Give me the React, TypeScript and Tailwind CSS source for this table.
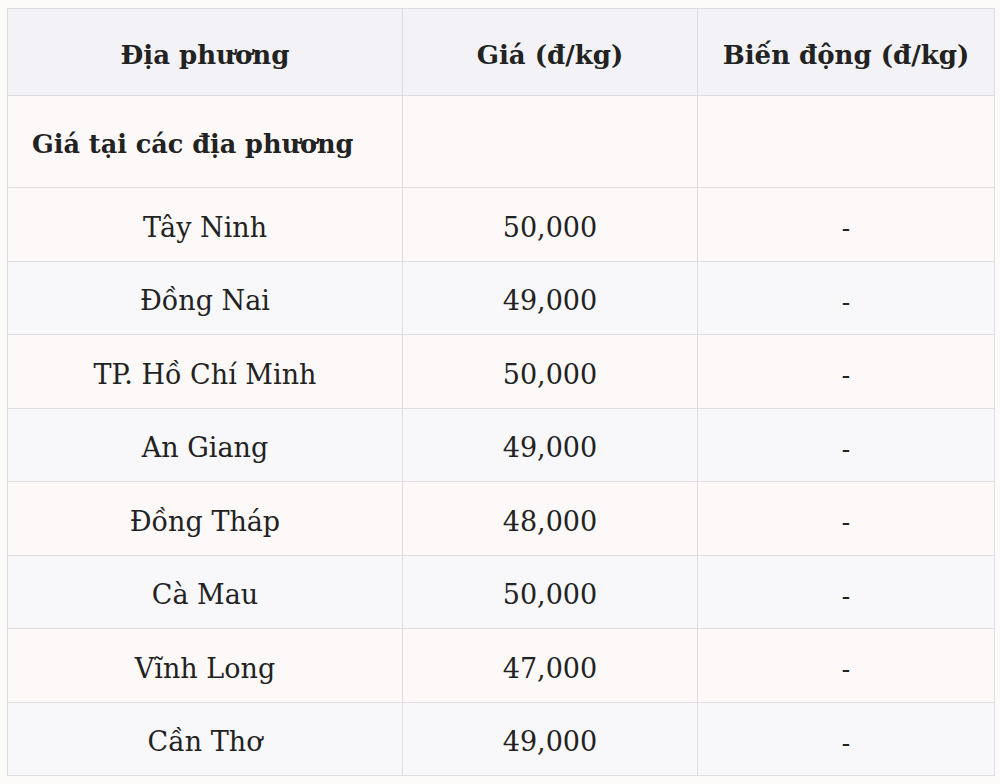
const rows = [
  ['Tây Ninh', '50,000'],
  ['Đồng Nai', '49,000'],
  ['TP. Hồ Chí Minh', '50,000'],
  ['An Giang', '49,000'],
  ['Đồng Tháp', '48,000'],
  ['Cà Mau', '50,000'],
  ['Vĩnh Long', '47,000'],
  ['Cần Thơ', '49,000'],
];

export default function App() {
  return (
    <div className="w-[1000px] h-[784px] bg-[#fdfbfa] pt-2 pl-[7px] font-['DejaVu_Serif',serif] text-[#222222]">
      <table className="w-[987px] border-collapse table-fixed">
        <colgroup>
          <col className="w-[395px]" />
          <col className="w-[295px]" />
          <col className="w-[297px]" />
        </colgroup>
        <thead>
          <tr className="h-[87px] bg-[#f3f2f6]">
            <th className="border border-[#dfdde0] pt-[6px] text-center text-[26px] font-bold">Địa phương</th>
            <th className="border border-[#dfdde0] pt-[6px] text-center text-[26px] font-bold">Giá (đ/kg)</th>
            <th className="border border-[#dfdde0] pt-[6px] text-center text-[26px] font-bold">Biến động (đ/kg)</th>
          </tr>
        </thead>
        <tbody>
          <tr className="h-[92px] bg-[#fcf9f8]">
            <td className="border border-[#dfdde0] pt-[6px] pl-[24px] text-left text-[25.5px] font-bold">Giá tại các địa phương</td>
            <td className="border border-[#dfdde0]"></td>
            <td className="border border-[#dfdde0]"></td>
          </tr>
          {rows.map(([place, price], i) => (
            <tr key={place} className={i % 2 === 0 ? 'h-[73.5px] bg-[#fcf9f8]' : 'h-[73.5px] bg-[#f8f7fa]'}>
              <td className="border border-[#dfdde0] pt-[7px] text-center text-[27px]">{place}</td>
              <td className="border border-[#dfdde0] pt-[7px] text-center text-[27px]">{price}</td>
              <td className="border border-[#dfdde0] pt-[7px] text-center text-[26px] font-['Noto_Sans',sans-serif]">-</td>
            </tr>
          ))}
        </tbody>
      </table>
    </div>
  );
}
